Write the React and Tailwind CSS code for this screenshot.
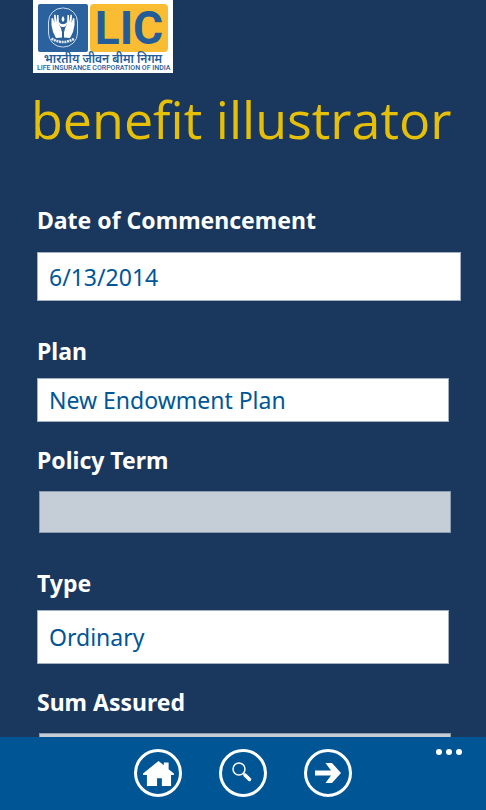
import { useState } from "react";

const inputClass =
  "block w-full border border-[#a3b0c2] bg-white px-[11px] text-[23px] text-[#005696] outline-none";

function Emblem() {
  return (
    <svg viewBox="0 0 50 48" className="h-12 w-[50px] shrink-0" aria-hidden="true">
      <rect width="50" height="48" rx="2" fill="#2b619d" />
      <rect x="10.500" y="4" width="29" height="39" rx="14" fill="none" stroke="#c9dcec" strokeWidth="1" />
      {/* flame between the palms */}
      <path d="M25 12c1.800 2.500 2 4 0 6c-2-2-1.800-3.500 0-6z" fill="#fff" />
      <path d="M21 18c1 1.800 2.500 2.200 4 2.200s3-.4 4-2.200c.3 3.500-1.500 5-4 5s-4.300-1.500-4-5z" fill="#fff" />
      {/* palms */}
      <g fill="#fff">
        <path d="M13.500 14.500l1.500-.5l1.500 5l-.5-8l1.500-.5l1.200 8l.3-7.500h1.500l.5 9l2 4.500l1 4v5l-6 .5l-3-6l-1.500-7z" />
        <path d="M36.500 14.500l-1.500-.5l-1.500 5l.5-8l-1.500-.5l-1.200 8l-.3-7.500h-1.500l-.5 9l-2 4.500l-1 4v5l6 .5l3-6l1.500-7z" />
      </g>
      <path d="M13.500 34.500q11.500 7 23 0" fill="none" stroke="#e5eef6" strokeWidth="2.500" strokeDasharray="2 .7" />
    </svg>
  );
}

function Logo() {
  return (
    <div className="ml-[33px] h-[73px] w-[140px] bg-white px-1 pt-1 text-[#245c9a]">
      <div className="flex justify-between px-px">
        <Emblem />
        <div className="flex h-12 w-[78px] items-center justify-center rounded-sm bg-[#f9bc32] font-[Roboto] text-[46px] leading-none font-bold">
          LIC
        </div>
      </div>
      <p className="mt-px text-center text-[12px] leading-[12px] font-semibold whitespace-nowrap">
        भारतीय जीवन बीमा निगम
      </p>
      <p className="text-center font-[Roboto] text-[7px] leading-[6px] font-medium whitespace-nowrap">
        LIFE INSURANCE CORPORATION OF INDIA
      </p>
    </div>
  );
}

function Label({ htmlFor, children }) {
  return (
    <label htmlFor={htmlFor} className="block text-[23px] leading-8 font-bold text-white">
      {children}
    </label>
  );
}

function BarButton({ label, children }) {
  return (
    <button
      type="button"
      aria-label={label}
      className="flex size-12 items-center justify-center rounded-full border-3 border-white text-white"
    >
      {children}
    </button>
  );
}

export default function App() {
  const [date, setDate] = useState("6/13/2014");
  const [plan, setPlan] = useState("New Endowment Plan");
  const [type, setType] = useState("Ordinary");

  return (
    <div className="flex h-screen flex-col overflow-hidden bg-[#1a375d] font-['Noto_Sans',sans-serif]">
      <main className="min-h-0 flex-1 overflow-hidden">
        <Logo />

        <h1 className="mt-[10px] ml-[31px] font-['Open_Sans'] text-[52px] leading-[72px] font-normal whitespace-nowrap text-[#e6bf07]">
          benefit illustrator
        </h1>

        <form className="mt-[49px] px-[37px]">
          <Label htmlFor="date">Date of Commencement</Label>
          <div className="mt-4 -mr-3">
            <input
              id="date"
              type="text"
              value={date}
              onChange={(e) => setDate(e.target.value)}
              className={`${inputClass} h-[49px]`}
            />
          </div>

          <div className="mt-[34px]">
            <Label htmlFor="plan">Plan</Label>
            <select
              id="plan"
              value={plan}
              onChange={(e) => setPlan(e.target.value)}
              className={`${inputClass} mt-[11px] h-11 appearance-none`}
            >
              <option>New Endowment Plan</option>
            </select>
          </div>

          <div className="mt-[22px]">
            <Label htmlFor="term">Policy Term</Label>
            <input
              id="term"
              type="text"
              disabled
              className="mt-[15px] ml-[2px] block h-[42px] w-full border border-[#8c9bb0] bg-[#c5cdd7]"
            />
          </div>

          <div className="mt-[34px]">
            <Label htmlFor="type">Type</Label>
            <select
              id="type"
              value={type}
              onChange={(e) => setType(e.target.value)}
              className={`${inputClass} mt-[11px] h-[54px] appearance-none`}
            >
              <option>Ordinary</option>
            </select>
          </div>

          <div className="mt-[22px]">
            <Label htmlFor="sum">Sum Assured</Label>
            <input
              id="sum"
              type="text"
              disabled
              className="mt-[15px] ml-[2px] block h-[42px] w-full border border-[#8c9bb0] bg-[#c5cdd7]"
            />
          </div>
        </form>
      </main>

      {/* App bar */}
      <footer className="relative flex h-[73px] shrink-0 justify-center gap-[37px] bg-[#005595] pt-3">
        <BarButton label="Home">
          <svg viewBox="0 0 32 28" className="h-[27px] w-[31px]" fill="currentColor">
            <path d="M16 1l5.500 4.500V2.500h5v7L32 14v1.500h-3V27h-9.500v-8h-5v8H4V15.500H0V14z" />
          </svg>
        </BarButton>
        <BarButton label="Search">
          <svg viewBox="0 0 24 24" className="size-6" fill="none" stroke="currentColor">
            <circle cx="8" cy="8" r="6" strokeWidth="1.500" />
            <path d="M12 12l2.500 2.500" strokeWidth="1.500" />
            <path d="M14 14l4.500 4.500" strokeWidth="3.500" strokeLinecap="round" />
          </svg>
        </BarButton>
        <BarButton label="Next">
          <svg viewBox="0 0 26 20" className="h-5 w-[26px]" fill="currentColor">
            <path d="M0 7.500h16L10.500 0h6.500l9 10l-9 10h-6.500L16 12.500H0z" />
          </svg>
        </BarButton>
        <button type="button" aria-label="More" className="absolute top-3 right-6 flex gap-1 text-white">
          <span className="size-[6px] rounded-full bg-white" />
          <span className="size-[6px] rounded-full bg-white" />
          <span className="size-[6px] rounded-full bg-white" />
        </button>
      </footer>
    </div>
  );
}
